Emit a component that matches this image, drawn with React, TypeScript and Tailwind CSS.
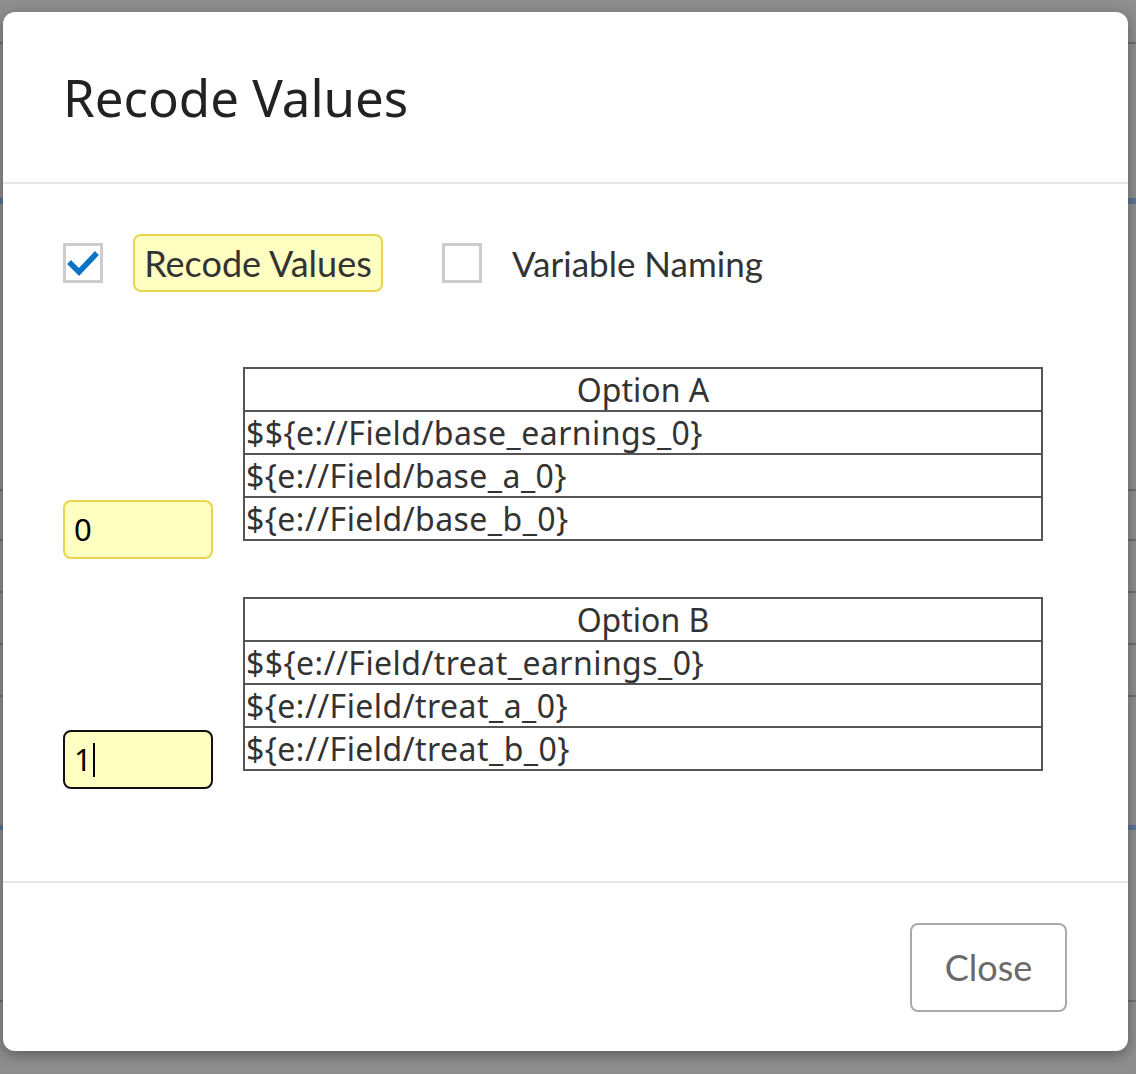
import type { ReactNode } from "react";

const sans = "font-['Noto_Sans','Open_Sans',sans-serif]";
const round = "font-['Lato','Noto_Sans',sans-serif]";

type Option = {
  title: string;
  rows: string[];
  value: string;
  focused?: boolean;
};

const options: Option[] = [
  {
    title: "Option A",
    rows: [
      "$${e://Field/base_earnings_0}",
      "${e://Field/base_a_0}",
      "${e://Field/base_b_0}",
    ],
    value: "0",
  },
  {
    title: "Option B",
    rows: [
      "$${e://Field/treat_earnings_0}",
      "${e://Field/treat_a_0}",
      "${e://Field/treat_b_0}",
    ],
    value: "1",
    focused: true,
  },
];

const Checkbox = ({ checked }: { checked?: boolean }) => (
  <div className="flex h-10 w-10 shrink-0 items-center justify-center border-[3px] border-[#cccccc] bg-white">
    {checked && (
      <svg width="34" height="34" viewBox="0 0 34 34">
        <polyline
          points="5,18 13,26 29,9"
          fill="none"
          stroke="#0a74c4"
          strokeWidth="5.5"
          strokeLinecap="square"
        />
      </svg>
    )}
  </div>
);

const OptionTable = ({ option }: { option: Option }) => (
  <table className="w-[800px] border-collapse border-2 border-[#6e6e6e] text-[32px] leading-none text-[#333]">
    <tbody>
      <tr className="h-[43px]">
        <td className="border-2 border-[#555] px-[2px] text-center">
          {option.title}
        </td>
      </tr>
      {option.rows.map((row) => (
        <tr key={row} className="h-[43px]">
          <td className="border-2 border-[#555] px-[1px] text-left tracking-[0.45px]">
            {row}
          </td>
        </tr>
      ))}
    </tbody>
  </table>
);

const ValueBox = ({ value, focused }: { value: string; focused?: boolean }) => (
  <div
    className={`mb-[-18px] flex h-[59px] w-[150px] shrink-0 items-center rounded-[8px] border-2 bg-[#ffffc2] pl-[9px] text-[31px] text-black ${
      focused ? "border-[#111]" : "border-[#e8d44d]"
    }`}
  >
    <span>{value}</span>
    {focused && <span className="ml-[1px] h-[34px] w-[2px] bg-black" />}
  </div>
);

const BackRow = ({ h, children }: { h: string; children?: ReactNode }) => (
  <div className={`${h} border-b-2 border-[#6f6f6f]`}>{children}</div>
);

export default function App() {
  return (
    <div className={`relative h-[1074px] w-[1136px] overflow-hidden bg-[#8e8e8e] ${sans}`}>
      {/* page behind the overlay */}
      <div className="flex flex-col">
        <BackRow h="h-[44px]" />
        <div className="h-[154px]" />
        <div className="h-[6px] bg-[#5b7393]" />
        <div className="h-[237px]" />
        <BackRow h="h-[50px]" />
        <BackRow h="h-[50px]" />
        <BackRow h="h-[52px]" />
        <BackRow h="h-[52px]" />
        <BackRow h="h-[52px]" />
        <div className="h-[128px]" />
        <div className="h-[5px] bg-[#5b7393]" />
        <BackRow h="h-[172px]" />
        <div className="h-[104px]" />
        <div className="h-[10px] bg-[#a6a6a6]" />
      </div>

      <div className="absolute left-[3px] top-[12px] flex h-[1039px] w-[1125px] flex-col rounded-[12px] bg-white shadow-[0_4px_14px_rgba(0,0,0,0.35)]">
        <header className="flex h-[172px] items-center border-b-2 border-[#e6e6e6] pl-[60px]">
          <h1 className="text-[51px] font-normal text-[#222]">Recode Values</h1>
        </header>

        <div className="flex flex-1 flex-col pl-[60px] pt-[50px]">
          <div className="flex items-center">
            <Checkbox checked />
            <div
              className={`ml-[30px] flex h-[58px] w-[250px] items-center justify-center rounded-[8px] border-2 border-[#e8d44d] bg-[#ffffc2] text-[36px] text-[#333] ${round}`}
            >
              Recode Values
            </div>
            <div className="ml-[59px]">
              <Checkbox />
            </div>
            <span className={`ml-[30px] text-[35px] text-[#333] ${round}`}>
              Variable Naming
            </span>
          </div>

          <div className="mt-[75px] flex flex-col gap-[56px]">
            {options.map((option) => (
              <div key={option.title} className="flex items-end gap-[30px]">
                <ValueBox value={option.value} focused={option.focused} />
                <OptionTable option={option} />
              </div>
            ))}
          </div>
        </div>

        <footer className="flex h-[170px] items-center justify-end border-t-2 border-[#e6e6e6] pr-[61px]">
          <button
            className={`flex h-[89px] w-[157px] items-center justify-center rounded-[8px] border-2 border-[#aaaaaa] bg-white text-[36px] text-[#6a6a6a] ${round}`}
          >
            Close
          </button>
        </footer>
      </div>
    </div>
  );
}
